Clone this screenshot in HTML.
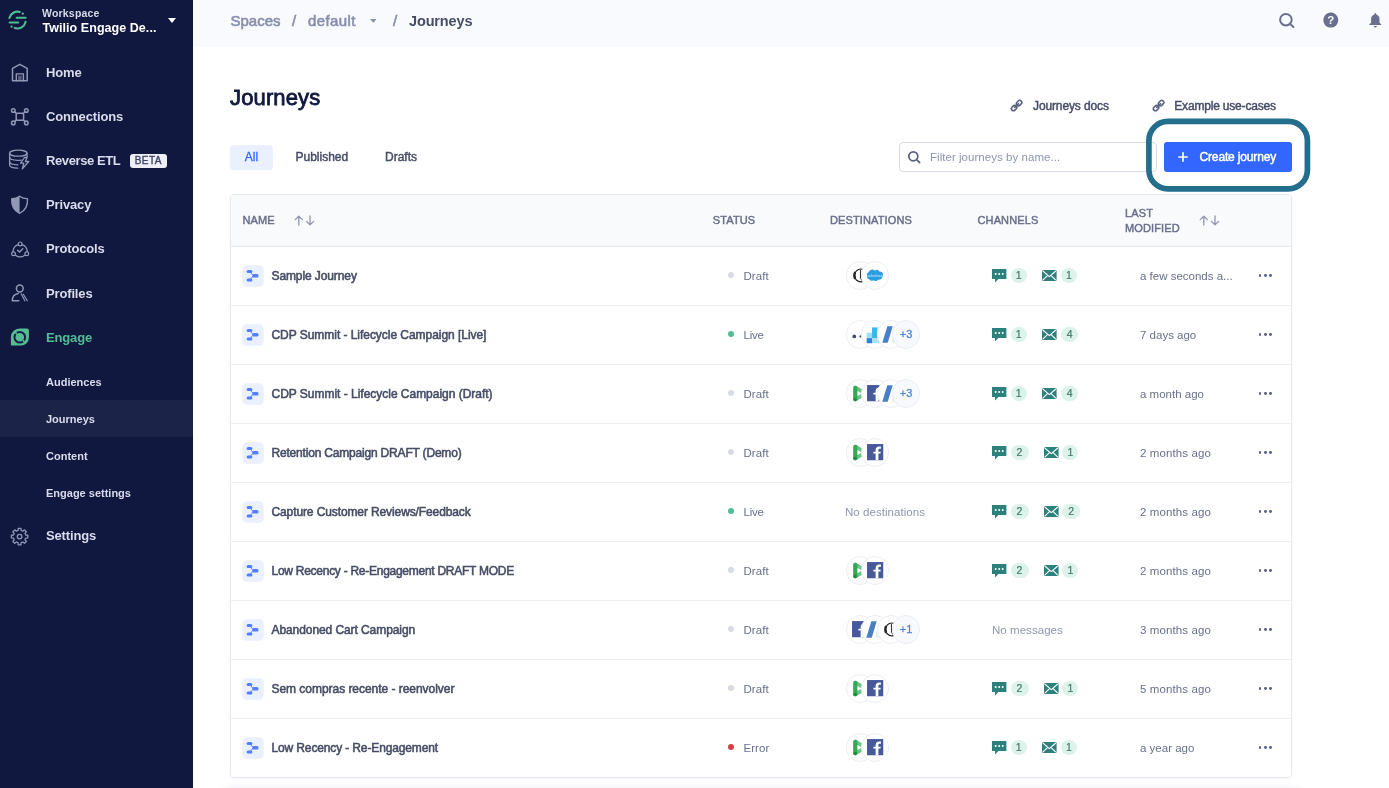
<!DOCTYPE html>
<html lang="en">
<head>
<meta charset="utf-8">
<title>Journeys</title>
<style>
*{box-sizing:border-box;margin:0;padding:0}
html,body{width:1389px;height:788px;overflow:hidden;background:#fff}
body{font-family:"Liberation Sans",sans-serif;color:#474d66;position:relative}
.abs{position:absolute;white-space:nowrap}
/* sidebar */
#side{position:absolute;left:0;top:0;width:193px;height:788px;background:#101840}
#side .it{position:absolute;left:46px;font-size:13px;font-weight:700;color:#d9dcea;white-space:nowrap;line-height:16px;letter-spacing:-.15px}
#side .sub{position:absolute;left:46px;font-size:11px;font-weight:700;color:#d9dcea;white-space:nowrap;line-height:14px}
#active{position:absolute;left:0;top:400px;width:193px;height:37px;background:#1c2349}
#sideic{position:absolute;left:0;top:0}
/* topbar */
#top{position:absolute;left:193px;top:0;width:1196px;height:47px;background:#f9fafd}
.bc{position:absolute;top:11.500px;font-size:15px;line-height:18px;color:#888eac;white-space:nowrap;-webkit-text-stroke:.6px #888eac}
/* main */
h1{position:absolute;left:230px;top:84.700px;font-size:22px;line-height:26px;font-weight:400;color:#101840;letter-spacing:.14px;-webkit-text-stroke:.8px #101840}
.tab{position:absolute;top:145px;height:25px;line-height:25.500px;font-size:12px;color:#474d66;white-space:nowrap;-webkit-text-stroke:.45px #474d66}
.lnk{position:absolute;top:98.700px;font-size:12px;line-height:14px;color:#474d66;white-space:nowrap;letter-spacing:-.12px;-webkit-text-stroke:.45px #474d66}
#search{position:absolute;left:899px;top:142px;width:258px;height:30px;border:1px solid #d8dae5;border-radius:4px;background:#fff}
#search span{position:absolute;left:30px;top:7px;font-size:11.500px;line-height:14px;color:#8f95b2;white-space:nowrap;letter-spacing:.04px}
#btn{position:absolute;left:1164px;top:142px;width:128px;height:30px;border-radius:3px;background:#3366ff;color:#fff;font-size:12px;line-height:30px;white-space:nowrap}
#anno{position:absolute;left:1146px;top:118.700px;width:164px;height:73px;border:5.500px solid #236e8d;border-radius:20px}
/* table */
#tbl{position:absolute;left:230px;top:194px;width:1062px;height:584px;border:1px solid #e6e8f0;border-radius:4px;box-shadow:0 1px 3px rgba(16,24,64,.04)}
#thead{position:absolute;left:231px;top:195px;width:1060px;height:52px;background:#f9fafc;border-bottom:1px solid #e6e8f0;border-radius:3px 3px 0 0}
.th{position:absolute;font-size:11px;line-height:13px;color:#696f8c;letter-spacing:.12px;white-space:nowrap;-webkit-text-stroke:.45px #696f8c}
.row{position:absolute;left:0;width:1389px;height:59px}
.row.ln:after{content:"";position:absolute;left:231px;width:1060px;bottom:0;height:1px;background:#edeff5}
.row .ji{position:absolute;left:242px;top:18.500px;width:22px;height:22px}
.row .nm{position:absolute;left:271.500px;top:22px;font-size:12px;line-height:15px;color:#474d66;white-space:nowrap;letter-spacing:-.05px;-webkit-text-stroke:.55px #474d66}
.row .dot{position:absolute;left:728.200px;top:25.400px;width:6px;height:6px;border-radius:50%}
.dot.draft{background:#d8dae5}.dot.live{background:#52bd94}.dot.error{background:#d14343}
.row .st{position:absolute;left:743.500px;top:22px;font-size:11.500px;line-height:15px;color:#696f8c;white-space:nowrap;letter-spacing:.05px}
.row .dc{position:absolute;top:14.900px;width:28.300px;height:28.300px;border-radius:50%;background:#fff;border:1px solid #ebedf3;overflow:hidden}
.row .dc svg{position:absolute;left:-1px;top:-1px;width:28.300px;height:28.300px}
.row .dc.more{background:#f8f9fc;color:#4a88dc;font-size:11px;line-height:27.300px;text-align:center;letter-spacing:0;-webkit-text-stroke:.3px #4a88dc}
.row .none{position:absolute;top:22px;font-size:11.500px;line-height:15px;color:#8f95b2;white-space:nowrap;letter-spacing:.05px}
.row .chi{position:absolute;line-height:0}
.row .bd{position:absolute;top:21px;height:15px;border-radius:8px;background:#dcf2ea;color:#3d7c64;font-size:10.500px;line-height:15px;text-align:center;-webkit-text-stroke:.2px #3d7c64}
.row .md{position:absolute;left:1140px;top:22px;font-size:11.500px;line-height:15px;color:#696f8c;white-space:nowrap}
.row .dots3{position:absolute;left:1258.500px;top:27.300px;width:14px;height:3px}
.row .dots3 i{position:absolute;top:0;width:2.800px;height:2.800px;border-radius:50%;background:#5a607f}
.row .dots3 i:nth-child(1){left:0}.row .dots3 i:nth-child(2){left:5.300px}.row .dots3 i:nth-child(3){left:10.600px}
</style>
</head>
<body><div id="root" style="position:absolute;left:0;top:0;width:1389px;height:788px;will-change:transform">
<!-- SIDEBAR -->
<div id="side">
  <div id="active"></div>
  <svg id="sideic" width="40" height="560" viewBox="0 0 40 560" fill="none" stroke="#9298b8" stroke-width="1.500" stroke-linecap="round" stroke-linejoin="round">
    <!-- logo -->
    <g stroke="#52bd94" stroke-width="2.100">
      <path d="M9.400 17.900A8.400 8.400 0 0 1 19.800 12"/><path d="M16.700 17.700H25.600"/><path d="M9.700 22.500H18.200"/><path d="M25.600 21.900A8.400 8.400 0 0 1 14.800 28.100"/>
      <circle cx="22.800" cy="13.700" r="1.150" fill="#52bd94" stroke="none"/><circle cx="11.600" cy="26.700" r="1.150" fill="#52bd94" stroke="none"/>
    </g>
    <!-- home -->
    <path d="M12.500 80.700V68.400L19.800 64.300L27.200 68.400V80.700Z" stroke-width="1.500"/>
    <path d="M16.300 80.700V73.900H23.400V80.700" stroke-width="1.400"/>
    <rect x="18" y="75.700" width="3.700" height="4.300" fill="#9298b8" fill-opacity=".55" stroke="none"/>
    <!-- connections -->
    <rect x="16.200" y="113.300" width="7.400" height="6.900" rx="1.300"/>
    <circle cx="13.300" cy="110.500" r="1.800"/><circle cx="26.300" cy="110.500" r="1.800"/><circle cx="13.300" cy="122.900" r="1.800"/><circle cx="26.300" cy="122.900" r="1.800"/>
    <path d="M14.600 111.800L16.500 113.600M25 111.800L23.300 113.600M14.600 121.600L16.500 119.900M25 121.600L23.300 119.900"/>
    <!-- reverse etl -->
    <g stroke-width="1.300">
    <ellipse cx="18.300" cy="153.200" rx="8.700" ry="3"/>
    <path d="M9.600 153.200V165c0 1.700 3.600 3.100 8.200 3.200"/>
    <path d="M27 153.200V157"/>
    <path d="M9.600 157.300c0 1.600 3.600 2.900 8.300 3 1.200 0 2.300-.1 3.300-.2"/>
    <path d="M9.600 161.800c0 1.600 3.600 2.900 8.300 3"/>
    <path d="M24.500 157.500L20.500 163.200H23.800L22.300 168.800L28.800 161.500H25.400L27 157.500Z"/>
    </g>
    <!-- privacy -->
    <path d="M19.600 196.200C22 198 24.900 198.800 27.500 198.700C27.900 205 25.500 210.400 19.600 213.500C13.700 210.400 11.300 205 11.700 198.700C14.300 198.800 17.200 198 19.600 196.200Z" stroke-width="1.300"/>
    <path d="M19.600 196.200V213.500C13.700 210.400 11.300 205 11.700 198.700C14.300 198.800 17.200 198 19.600 196.200Z" fill="#9298b8" stroke="none"/>
    <!-- protocols -->
    <g stroke-width="1.200">
    <path d="M18.300 244.600C15.300 245.500 13.200 248.200 13 251.600M22 244.600C25 245.500 27.100 248.200 27.300 251.600M15.500 255.200C18.300 257.300 22 257.300 24.800 255.200"/>
    <circle cx="20.150" cy="243.900" r="1.900"/><circle cx="13.500" cy="253.800" r="1.900"/><circle cx="26.800" cy="253.800" r="1.900"/>
    <path d="M17.600 250.200L19.500 252.100L22.800 248.800" stroke-width="1.400"/>
    </g>
    <!-- profiles -->
    <circle cx="19.800" cy="288.500" r="3.400"/>
    <path d="M12.300 300.800C12.300 297 14.500 294 18.200 293.400M12.300 300.800H18.800"/>
    <path d="M21.200 293.800L24.800 300.800M23.300 294.200L27.300 300.800" stroke-width="1.200"/>
    <!-- engage -->
    <path d="M19.500 328.600H26.900A2 2 0 0 1 28.900 330.600V337.500A8 8 0 0 1 20.900 345.500H10.900V337.200A8.600 8.600 0 0 1 19.500 328.600Z" fill="#55bd94" stroke="none"/>
    <circle cx="19.800" cy="337.200" r="5.300" stroke="#142046" stroke-width="2"/>
    <path d="M14.800 331.800L16.800 334M23.200 340.600L25.200 342.800" stroke="#55bd94" stroke-width="1.500"/>
    <!-- settings -->
    <path d="M18.080 530.490 L18.240 528.410 L20.960 528.410 L21.120 530.490 L22.850 531.200 L24.430 529.850 L26.350 531.770 L25 533.350 L25.710 535.080 L27.790 535.240 L27.790 537.960 L25.710 538.120 L25 539.850 L26.350 541.430 L24.430 543.350 L22.850 542 L21.120 542.710 L20.960 544.790 L18.240 544.790 L18.080 542.710 L16.350 542 L14.770 543.350 L12.850 541.430 L14.200 539.850 L13.490 538.120 L11.410 537.960 L11.410 535.240 L13.490 535.080 L14.200 533.350 L12.850 531.770 L14.770 529.850 L16.350 531.200Z" stroke-width="1.300"/>
    <circle cx="19.600" cy="536.600" r="2.300" stroke-width="1.300"/>
  </svg>
  <div class="abs" style="left:42px;top:7.300px;font-size:10.500px;line-height:12px;font-weight:700;color:#d8dbe8;letter-spacing:.2px">Workspace</div>
  <div class="abs" style="left:42.500px;top:20px;font-size:12.500px;line-height:16px;font-weight:700;color:#fff;letter-spacing:.05px">Twilio Engage De...</div>
  <svg class="abs" style="left:168px;top:18px" width="8" height="5" viewBox="0 0 8 5"><path d="M0 0h8L4 5z" fill="#fff"/></svg>

  <div class="it" style="top:64.500px">Home</div>
  <div class="it" style="top:108.500px">Connections</div>
  <div class="it" style="top:152.500px;letter-spacing:-.4px">Reverse ETL</div>
  <div class="abs" style="left:129.500px;top:153.500px;width:37.500px;height:14.500px;border-radius:3px;background:#edeff5;color:#3b4265;font-size:10px;line-height:14.500px;text-align:center;letter-spacing:.45px;-webkit-text-stroke:.35px #3b4265">BETA</div>
  <div class="it" style="top:197px">Privacy</div>
  <div class="it" style="top:241px">Protocols</div>
  <div class="it" style="top:285.500px">Profiles</div>
  <div class="it" style="top:329.500px;color:#52bd94">Engage</div>
  <div class="sub" style="top:375px">Audiences</div>
  <div class="sub" style="top:412px">Journeys</div>
  <div class="sub" style="top:449px">Content</div>
  <div class="sub" style="top:486px">Engage settings</div>
  <div class="it" style="top:528px">Settings</div>
</div>

<!-- TOPBAR -->
<div id="top"></div>
<div class="bc" style="left:230.500px">Spaces</div>
<div class="bc" style="left:292px">/</div>
<div class="bc" style="left:308px;letter-spacing:.4px">default</div>
<svg class="abs" style="left:369.700px;top:18.900px" width="6.600" height="3.800" viewBox="0 0 7 4"><path d="M0 0h7L3.500 4z" fill="#888eac"/></svg>
<div class="bc" style="left:393px">/</div>
<div class="bc" style="left:409px;font-weight:700;color:#474d66;font-size:14.500px;letter-spacing:-.14px;-webkit-text-stroke:0">Journeys</div>
<!-- top icons -->
<svg class="abs" style="left:1277px;top:11px" width="20" height="20" viewBox="1277 11 20 20" fill="none" stroke="#696f8c" stroke-width="2" stroke-linecap="round"><circle cx="1285.900" cy="19.700" r="5.800"/><path d="M1290.200 24L1293.400 27"/></svg>
<svg class="abs" style="left:1323px;top:12px" width="16" height="16" viewBox="0 0 16 16"><circle cx="7.800" cy="8.100" r="7.500" fill="#696f8c"/><text x="7.800" y="12.200" text-anchor="middle" font-family="Liberation Sans, sans-serif" font-size="11.500" font-weight="700" fill="#f9fafd">?</text></svg>
<svg class="abs" style="left:1369px;top:13px" width="13" height="15" viewBox="0 0 13 15"><path d="M6.300 0.300c.7 0 1.100.5 1.100 1.100v.3c2 .5 3.100 2.200 3.100 4.300v3.800l1.700 1.400v.9H.4v-.9l1.700-1.400V6c0-2.100 1.100-3.800 3.100-4.300v-.3c0-.6.400-1.100 1.100-1.100zM4.800 13h3a1.500 1.500 0 0 1-3 0z" fill="#696f8c"/></svg>

<!-- HEADER -->
<h1>Journeys</h1>
<svg class="abs" style="left:1010px;top:98.800px" width="13.200" height="13.200" viewBox="0 0 14 14" fill="none" stroke="#5a607f" stroke-width="1.700"><g transform="rotate(-45 7 7)"><rect x=".1" y="4.800" width="6.200" height="4.400" rx="2.200"/><rect x="7.700" y="4.800" width="6.200" height="4.400" rx="2.200"/><path d="M3.500 7H10.500"/></g></svg>
<div class="lnk" style="left:1033px">Journeys docs</div>
<svg class="abs" style="left:1151.800px;top:98.800px" width="13.200" height="13.200" viewBox="0 0 14 14" fill="none" stroke="#5a607f" stroke-width="1.700"><g transform="rotate(-45 7 7)"><rect x=".1" y="4.800" width="6.200" height="4.400" rx="2.200"/><rect x="7.700" y="4.800" width="6.200" height="4.400" rx="2.200"/><path d="M3.500 7H10.500"/></g></svg>
<div class="lnk" style="left:1174.300px;letter-spacing:-.19px">Example use-cases</div>

<div class="tab" style="left:230px;width:43px;text-align:center;background:#ebf0ff;color:#3366ff;border-radius:4px;-webkit-text-stroke:.3px #3366ff">All</div>
<div class="tab" style="left:295.500px">Published</div>
<div class="tab" style="left:385px">Drafts</div>

<div id="search">
  <svg class="abs" style="left:7px;top:6.500px" width="15" height="15" viewBox="0 0 15 15" fill="none" stroke="#5a607f" stroke-width="1.800" stroke-linecap="round"><circle cx="6.300" cy="6.300" r="4.500"/><path d="M9.700 9.700l2.900 2.900"/></svg>
  <span>Filter journeys by name...</span>
</div>
<div id="btn"><svg class="abs" style="left:14.200px;top:10px" width="10" height="10" viewBox="0 0 10 10" stroke="#fff" stroke-width="1.700"><path d="M5 .3v9.400M.3 5h9.400"/></svg><span class="abs" style="left:35.500px;top:0;letter-spacing:-.15px;-webkit-text-stroke:.45px #fff">Create journey</span></div>
<svg class="abs" style="left:1140px;top:112px" width="180" height="90" viewBox="1140 112 180 90" fill="none"><rect x="1148.900" y="121.400" width="158.500" height="67.500" rx="19" stroke="#236e8d" stroke-width="5.700"/></svg>

<!-- TABLE -->
<div id="tbl"></div>
<div id="thead"></div>
<div class="th" style="left:242.500px;top:214px">NAME</div>
<svg class="abs" style="left:294px;top:215px" width="21" height="11" viewBox="0 0 21 11" fill="none" stroke="#8f95b2" stroke-width="1.300" stroke-linecap="round" stroke-linejoin="round"><path d="M4.800 10V1.200M1.200 4.600L4.800 1.200L8.400 4.600"/><path d="M16 1V9.800M12.400 6.400L16 9.800L19.600 6.400"/></svg>
<div class="th" style="left:712.800px;top:214px">STATUS</div>
<div class="th" style="left:830px;top:214px">DESTINATIONS</div>
<div class="th" style="left:977.500px;top:214px">CHANNELS</div>
<div class="th" style="left:1125px;top:206px;line-height:15px">LAST<br>MODIFIED</div>
<svg class="abs" style="left:1198.500px;top:215px" width="21" height="11" viewBox="0 0 21 11" fill="none" stroke="#8f95b2" stroke-width="1.300" stroke-linecap="round" stroke-linejoin="round"><path d="M4.800 10V1.200M1.200 4.600L4.800 1.200L8.400 4.600"/><path d="M16 1V9.800M12.400 6.400L16 9.800L19.600 6.400"/></svg>
<div style="position:absolute;left:225px;top:789px;width:1075px;height:10px;box-shadow:0 0 10px rgba(16,24,64,.09)"></div>
<div class="row ln" style="top:246.5px">
<span class="ji"><svg viewBox="0 0 22 22" width="22" height="22"><rect x=".3" y=".3" width="21.400" height="21.400" rx="4.500" fill="#ebf0ff"/><rect x="4.600" y="5" width="5.800" height="3.100" rx="1.500" fill="#527dff"/><rect x="4.600" y="13.400" width="5.800" height="3.100" rx="1.500" fill="#527dff"/><rect x="10.300" y="9.100" width="6.200" height="3.400" rx="1.600" fill="#527dff"/><path d="M8.500 7.500l3 3.300-3 3.300" stroke="#527dff" stroke-width="1" fill="none"/></svg></span><span class="nm" style="letter-spacing:-0.1px">Sample Journey</span>
<span class="dot draft"></span><span class="st">Draft</span>
<span class="dc" style="left:845.7px"><svg viewBox="0 0 29 29"><circle cx="15.300" cy="14.800" r="6.600" fill="none" stroke="#222" stroke-width="1.200"/><path d="M9.400 11.300a7.500 7.500 0 0 0 0 7" stroke="#222" stroke-width="2.300" fill="none"/><path d="M14.800 9.300v8.700l2.500 2.800" stroke="#222" stroke-width="1" fill="none"/></svg></span>
<span class="dc" style="left:861.1px"><svg viewBox="0 0 29 29"><path d="M6.300 15.600a3 3 0 0 1 1.700-4.200 3.700 3.700 0 0 1 6.200-1.500 3.300 3.300 0 0 1 4.700.9 3.400 3.400 0 0 1 3 5.600 3.100 3.100 0 0 1-4.200 2.500 3.100 3.100 0 0 1-4.500.8 3.200 3.200 0 0 1-4.700-1 2.700 2.700 0 0 1-2.200-3.100z" fill="#2a9de0"/><text x="14.300" y="16.300" text-anchor="middle" font-family="Liberation Sans, sans-serif" font-size="3.400" font-style="italic" fill="#d9eefb">salesforce</text></svg></span>
<span class="chi" style="left:992px;top:22.500px"><svg viewBox="0 0 15 14" width="15" height="14"><path d="M0 0h14.400v10H6.400L3 13.600V10H0z" fill="#2d807c"/><circle cx="3.700" cy="5" r="1" fill="#fff"/><circle cx="7.200" cy="5" r="1" fill="#fff"/><circle cx="10.700" cy="5" r="1" fill="#fff"/></svg></span><span class="bd" style="left:1010.500px;width:16.4px">1</span>
<span class="chi" style="left:1042.2px;top:23.200px"><svg viewBox="0 0 15 11" width="15" height="11"><rect x="0" y="0" width="14.600" height="11" rx="1.500" fill="#2d807c"/><path d="M.8 1l6.500 5.600L13.800 1M.8 10.200l4.700-4.600M13.800 10.200L9.100 5.600" stroke="#fff" stroke-width="1.100" fill="none"/></svg></span><span class="bd" style="left:1060.8px;width:16px">1</span>
<span class="md" style="letter-spacing:0">a few seconds a...</span><span class="dots3"><i></i><i></i><i></i></span>
</div>
<div class="row ln" style="top:305.5px">
<span class="ji"><svg viewBox="0 0 22 22" width="22" height="22"><rect x=".3" y=".3" width="21.400" height="21.400" rx="4.500" fill="#ebf0ff"/><rect x="4.600" y="5" width="5.800" height="3.100" rx="1.500" fill="#527dff"/><rect x="4.600" y="13.400" width="5.800" height="3.100" rx="1.500" fill="#527dff"/><rect x="10.300" y="9.100" width="6.200" height="3.400" rx="1.600" fill="#527dff"/><path d="M8.500 7.500l3 3.300-3 3.300" stroke="#527dff" stroke-width="1" fill="none"/></svg></span><span class="nm" style="letter-spacing:-0.043px">CDP Summit - Lifecycle Campaign [Live]</span>
<span class="dot live"></span><span class="st" style="letter-spacing:-.2px">Live</span>
<span class="dc" style="left:845.7px"><svg viewBox="0 0 29 29"><circle cx="8.500" cy="16.800" r="1.900" fill="#3b4c7a"/><circle cx="15" cy="16.800" r="1.200" fill="#3b4c7a"/></svg></span>
<span class="dc" style="left:861.1px"><svg viewBox="0 0 29 29"><rect x="5.800" y="13.100" width="5.500" height="5.500" fill="#9fe0f2"/><rect x="5.800" y="18.600" width="5.500" height="5.200" fill="#2f7fe0"/><rect x="11.300" y="7.600" width="5.400" height="11" fill="#3eb5e5"/><rect x="11.300" y="18.600" width="5.400" height="5.200" fill="#a0e2f0"/><rect x="16.700" y="7.600" width="5.400" height="16.200" fill="#9fe0f2"/></svg></span>
<span class="dc" style="left:876.5px"><svg viewBox="0 0 29 29"><path d="M5.400 23.200L10.600 6.300h5.500L11 23.200z" fill="#4a7fc6"/><path d="M15.200 16l4.400 7.200h-4.400z" fill="#e3f2e3"/></svg></span>
<span class="dc more" style="left:891.9px">+3</span>
<span class="chi" style="left:992px;top:22.500px"><svg viewBox="0 0 15 14" width="15" height="14"><path d="M0 0h14.400v10H6.400L3 13.600V10H0z" fill="#2d807c"/><circle cx="3.700" cy="5" r="1" fill="#fff"/><circle cx="7.200" cy="5" r="1" fill="#fff"/><circle cx="10.700" cy="5" r="1" fill="#fff"/></svg></span><span class="bd" style="left:1010.500px;width:16.4px">1</span>
<span class="chi" style="left:1042.2px;top:23.200px"><svg viewBox="0 0 15 11" width="15" height="11"><rect x="0" y="0" width="14.600" height="11" rx="1.500" fill="#2d807c"/><path d="M.8 1l6.500 5.600L13.800 1M.8 10.200l4.700-4.600M13.800 10.200L9.100 5.600" stroke="#fff" stroke-width="1.100" fill="none"/></svg></span><span class="bd" style="left:1060.8px;width:17.5px">4</span>
<span class="md" style="letter-spacing:0">7 days ago</span><span class="dots3"><i></i><i></i><i></i></span>
</div>
<div class="row ln" style="top:364.5px">
<span class="ji"><svg viewBox="0 0 22 22" width="22" height="22"><rect x=".3" y=".3" width="21.400" height="21.400" rx="4.500" fill="#ebf0ff"/><rect x="4.600" y="5" width="5.800" height="3.100" rx="1.500" fill="#527dff"/><rect x="4.600" y="13.400" width="5.800" height="3.100" rx="1.500" fill="#527dff"/><rect x="10.300" y="9.100" width="6.200" height="3.400" rx="1.600" fill="#527dff"/><path d="M8.500 7.500l3 3.300-3 3.300" stroke="#527dff" stroke-width="1" fill="none"/></svg></span><span class="nm" style="letter-spacing:-0.02px">CDP Summit - Lifecycle Campaign (Draft)</span>
<span class="dot draft"></span><span class="st">Draft</span>
<span class="dc" style="left:845.7px"><svg viewBox="0 0 29 29"><path d="M7.500 9a2 2 0 0 1 3-1.700l11 6a1.800 1.800 0 0 1 0 3.200l-11 6a2 2 0 0 1-3-1.700z" fill="#6cc487"/><rect x="7.500" y="7" width="4.200" height="15.800" rx="2" fill="#34a853"/><path d="M11.700 12.200l4.600 2.600-4.600 2.600z" fill="#fff"/><circle cx="9.300" cy="21" r="1.800" fill="#1e8e3e"/></svg></span>
<span class="dc" style="left:861.1px"><svg viewBox="0 0 29 29"><rect x="6.200" y="6.200" width="16.600" height="16.600" fill="#47589b"/><path d="M15 22.800V15.900H12.700V14H15V12.450C15 9.850 16.450 8.600 18.550 8.600C19.350 8.600 20.050 8.670 20.400 8.720V10.900H19.250C18.150 10.900 17.800 11.350 17.800 12.350V14H20.250L19.950 15.900H17.800V22.800Z" fill="#fff"/></svg></span>
<span class="dc" style="left:876.5px"><svg viewBox="0 0 29 29"><path d="M5.400 23.200L10.600 6.300h5.500L11 23.200z" fill="#4a7fc6"/><path d="M15.200 16l4.400 7.200h-4.400z" fill="#e3f2e3"/></svg></span>
<span class="dc more" style="left:891.9px">+3</span>
<span class="chi" style="left:992px;top:22.500px"><svg viewBox="0 0 15 14" width="15" height="14"><path d="M0 0h14.400v10H6.400L3 13.600V10H0z" fill="#2d807c"/><circle cx="3.700" cy="5" r="1" fill="#fff"/><circle cx="7.200" cy="5" r="1" fill="#fff"/><circle cx="10.700" cy="5" r="1" fill="#fff"/></svg></span><span class="bd" style="left:1010.500px;width:16.4px">1</span>
<span class="chi" style="left:1042.2px;top:23.200px"><svg viewBox="0 0 15 11" width="15" height="11"><rect x="0" y="0" width="14.600" height="11" rx="1.500" fill="#2d807c"/><path d="M.8 1l6.500 5.600L13.800 1M.8 10.200l4.700-4.600M13.800 10.200L9.100 5.600" stroke="#fff" stroke-width="1.100" fill="none"/></svg></span><span class="bd" style="left:1060.8px;width:17.5px">4</span>
<span class="md" style="letter-spacing:0">a month ago</span><span class="dots3"><i></i><i></i><i></i></span>
</div>
<div class="row ln" style="top:423.5px">
<span class="ji"><svg viewBox="0 0 22 22" width="22" height="22"><rect x=".3" y=".3" width="21.400" height="21.400" rx="4.500" fill="#ebf0ff"/><rect x="4.600" y="5" width="5.800" height="3.100" rx="1.500" fill="#527dff"/><rect x="4.600" y="13.400" width="5.800" height="3.100" rx="1.500" fill="#527dff"/><rect x="10.300" y="9.100" width="6.200" height="3.400" rx="1.600" fill="#527dff"/><path d="M8.500 7.500l3 3.300-3 3.300" stroke="#527dff" stroke-width="1" fill="none"/></svg></span><span class="nm" style="letter-spacing:-0.19px">Retention Campaign DRAFT (Demo)</span>
<span class="dot draft"></span><span class="st">Draft</span>
<span class="dc" style="left:845.7px"><svg viewBox="0 0 29 29"><path d="M7.500 9a2 2 0 0 1 3-1.700l11 6a1.800 1.800 0 0 1 0 3.200l-11 6a2 2 0 0 1-3-1.700z" fill="#6cc487"/><rect x="7.500" y="7" width="4.200" height="15.800" rx="2" fill="#34a853"/><path d="M11.700 12.200l4.600 2.600-4.600 2.600z" fill="#fff"/><circle cx="9.300" cy="21" r="1.800" fill="#1e8e3e"/></svg></span>
<span class="dc" style="left:861.1px"><svg viewBox="0 0 29 29"><rect x="6.200" y="6.200" width="16.600" height="16.600" fill="#47589b"/><path d="M15 22.800V15.900H12.700V14H15V12.450C15 9.850 16.450 8.600 18.550 8.600C19.350 8.600 20.050 8.670 20.400 8.720V10.900H19.250C18.150 10.900 17.800 11.350 17.800 12.350V14H20.250L19.950 15.900H17.800V22.800Z" fill="#fff"/></svg></span>
<span class="chi" style="left:992px;top:22.500px"><svg viewBox="0 0 15 14" width="15" height="14"><path d="M0 0h14.400v10H6.400L3 13.600V10H0z" fill="#2d807c"/><circle cx="3.700" cy="5" r="1" fill="#fff"/><circle cx="7.200" cy="5" r="1" fill="#fff"/><circle cx="10.700" cy="5" r="1" fill="#fff"/></svg></span><span class="bd" style="left:1010.500px;width:18px">2</span>
<span class="chi" style="left:1043.8px;top:23.200px"><svg viewBox="0 0 15 11" width="15" height="11"><rect x="0" y="0" width="14.600" height="11" rx="1.500" fill="#2d807c"/><path d="M.8 1l6.500 5.600L13.800 1M.8 10.200l4.700-4.600M13.800 10.200L9.100 5.600" stroke="#fff" stroke-width="1.100" fill="none"/></svg></span><span class="bd" style="left:1062.4px;width:16px">1</span>
<span class="md" style="letter-spacing:.1px">2 months ago</span><span class="dots3"><i></i><i></i><i></i></span>
</div>
<div class="row ln" style="top:482.5px">
<span class="ji"><svg viewBox="0 0 22 22" width="22" height="22"><rect x=".3" y=".3" width="21.400" height="21.400" rx="4.500" fill="#ebf0ff"/><rect x="4.600" y="5" width="5.800" height="3.100" rx="1.500" fill="#527dff"/><rect x="4.600" y="13.400" width="5.800" height="3.100" rx="1.500" fill="#527dff"/><rect x="10.300" y="9.100" width="6.200" height="3.400" rx="1.600" fill="#527dff"/><path d="M8.500 7.500l3 3.300-3 3.300" stroke="#527dff" stroke-width="1" fill="none"/></svg></span><span class="nm" style="letter-spacing:-0.11px">Capture Customer Reviews/Feedback</span>
<span class="dot live"></span><span class="st" style="letter-spacing:-.2px">Live</span>
<span class="none" style="left:845px">No destinations</span>
<span class="chi" style="left:992px;top:22.500px"><svg viewBox="0 0 15 14" width="15" height="14"><path d="M0 0h14.400v10H6.400L3 13.600V10H0z" fill="#2d807c"/><circle cx="3.700" cy="5" r="1" fill="#fff"/><circle cx="7.200" cy="5" r="1" fill="#fff"/><circle cx="10.700" cy="5" r="1" fill="#fff"/></svg></span><span class="bd" style="left:1010.500px;width:18px">2</span>
<span class="chi" style="left:1043.8px;top:23.200px"><svg viewBox="0 0 15 11" width="15" height="11"><rect x="0" y="0" width="14.600" height="11" rx="1.500" fill="#2d807c"/><path d="M.8 1l6.500 5.600L13.800 1M.8 10.200l4.700-4.600M13.800 10.200L9.100 5.600" stroke="#fff" stroke-width="1.100" fill="none"/></svg></span><span class="bd" style="left:1062.4px;width:17.5px">2</span>
<span class="md" style="letter-spacing:.1px">2 months ago</span><span class="dots3"><i></i><i></i><i></i></span>
</div>
<div class="row ln" style="top:541.5px">
<span class="ji"><svg viewBox="0 0 22 22" width="22" height="22"><rect x=".3" y=".3" width="21.400" height="21.400" rx="4.500" fill="#ebf0ff"/><rect x="4.600" y="5" width="5.800" height="3.100" rx="1.500" fill="#527dff"/><rect x="4.600" y="13.400" width="5.800" height="3.100" rx="1.500" fill="#527dff"/><rect x="10.300" y="9.100" width="6.200" height="3.400" rx="1.600" fill="#527dff"/><path d="M8.500 7.500l3 3.300-3 3.300" stroke="#527dff" stroke-width="1" fill="none"/></svg></span><span class="nm" style="letter-spacing:-0.267px">Low Recency - Re-Engagement DRAFT MODE</span>
<span class="dot draft"></span><span class="st">Draft</span>
<span class="dc" style="left:845.7px"><svg viewBox="0 0 29 29"><path d="M7.500 9a2 2 0 0 1 3-1.700l11 6a1.800 1.800 0 0 1 0 3.200l-11 6a2 2 0 0 1-3-1.700z" fill="#6cc487"/><rect x="7.500" y="7" width="4.200" height="15.800" rx="2" fill="#34a853"/><path d="M11.700 12.200l4.600 2.600-4.600 2.600z" fill="#fff"/><circle cx="9.300" cy="21" r="1.800" fill="#1e8e3e"/></svg></span>
<span class="dc" style="left:861.1px"><svg viewBox="0 0 29 29"><rect x="6.200" y="6.200" width="16.600" height="16.600" fill="#47589b"/><path d="M15 22.800V15.900H12.700V14H15V12.450C15 9.850 16.450 8.600 18.550 8.600C19.350 8.600 20.050 8.670 20.400 8.720V10.900H19.250C18.150 10.900 17.800 11.350 17.800 12.350V14H20.250L19.950 15.900H17.800V22.800Z" fill="#fff"/></svg></span>
<span class="chi" style="left:992px;top:22.500px"><svg viewBox="0 0 15 14" width="15" height="14"><path d="M0 0h14.400v10H6.400L3 13.600V10H0z" fill="#2d807c"/><circle cx="3.700" cy="5" r="1" fill="#fff"/><circle cx="7.200" cy="5" r="1" fill="#fff"/><circle cx="10.700" cy="5" r="1" fill="#fff"/></svg></span><span class="bd" style="left:1010.500px;width:18px">2</span>
<span class="chi" style="left:1043.8px;top:23.200px"><svg viewBox="0 0 15 11" width="15" height="11"><rect x="0" y="0" width="14.600" height="11" rx="1.500" fill="#2d807c"/><path d="M.8 1l6.500 5.600L13.800 1M.8 10.200l4.700-4.600M13.800 10.200L9.100 5.600" stroke="#fff" stroke-width="1.100" fill="none"/></svg></span><span class="bd" style="left:1062.4px;width:16px">1</span>
<span class="md" style="letter-spacing:.1px">2 months ago</span><span class="dots3"><i></i><i></i><i></i></span>
</div>
<div class="row ln" style="top:600.5px">
<span class="ji"><svg viewBox="0 0 22 22" width="22" height="22"><rect x=".3" y=".3" width="21.400" height="21.400" rx="4.500" fill="#ebf0ff"/><rect x="4.600" y="5" width="5.800" height="3.100" rx="1.500" fill="#527dff"/><rect x="4.600" y="13.400" width="5.800" height="3.100" rx="1.500" fill="#527dff"/><rect x="10.300" y="9.100" width="6.200" height="3.400" rx="1.600" fill="#527dff"/><path d="M8.500 7.500l3 3.300-3 3.300" stroke="#527dff" stroke-width="1" fill="none"/></svg></span><span class="nm" style="letter-spacing:-0.08px">Abandoned Cart Campaign</span>
<span class="dot draft"></span><span class="st">Draft</span>
<span class="dc" style="left:845.7px"><svg viewBox="0 0 29 29"><rect x="6.200" y="6.200" width="16.600" height="16.600" fill="#47589b"/><path d="M15 22.800V15.900H12.700V14H15V12.450C15 9.850 16.450 8.600 18.550 8.600C19.350 8.600 20.050 8.670 20.400 8.720V10.900H19.250C18.150 10.900 17.800 11.350 17.800 12.350V14H20.250L19.950 15.900H17.800V22.800Z" fill="#fff"/></svg></span>
<span class="dc" style="left:861.1px"><svg viewBox="0 0 29 29"><path d="M5.400 23.200L10.600 6.300h5.500L11 23.200z" fill="#4a7fc6"/><path d="M15.200 16l4.400 7.200h-4.400z" fill="#e3f2e3"/></svg></span>
<span class="dc" style="left:876.5px"><svg viewBox="0 0 29 29"><circle cx="15.300" cy="14.800" r="6.600" fill="none" stroke="#222" stroke-width="1.200"/><path d="M9.400 11.300a7.500 7.500 0 0 0 0 7" stroke="#222" stroke-width="2.300" fill="none"/><path d="M14.800 9.300v8.700l2.500 2.800" stroke="#222" stroke-width="1" fill="none"/></svg></span>
<span class="dc more" style="left:891.9px">+1</span>
<span class="none" style="left:992px">No messages</span>
<span class="md" style="letter-spacing:.1px">3 months ago</span><span class="dots3"><i></i><i></i><i></i></span>
</div>
<div class="row ln" style="top:659.5px">
<span class="ji"><svg viewBox="0 0 22 22" width="22" height="22"><rect x=".3" y=".3" width="21.400" height="21.400" rx="4.500" fill="#ebf0ff"/><rect x="4.600" y="5" width="5.800" height="3.100" rx="1.500" fill="#527dff"/><rect x="4.600" y="13.400" width="5.800" height="3.100" rx="1.500" fill="#527dff"/><rect x="10.300" y="9.100" width="6.200" height="3.400" rx="1.600" fill="#527dff"/><path d="M8.500 7.500l3 3.300-3 3.300" stroke="#527dff" stroke-width="1" fill="none"/></svg></span><span class="nm" style="letter-spacing:-0.037px">Sem compras recente - reenvolver</span>
<span class="dot draft"></span><span class="st">Draft</span>
<span class="dc" style="left:845.7px"><svg viewBox="0 0 29 29"><path d="M7.500 9a2 2 0 0 1 3-1.700l11 6a1.800 1.800 0 0 1 0 3.200l-11 6a2 2 0 0 1-3-1.700z" fill="#6cc487"/><rect x="7.500" y="7" width="4.200" height="15.800" rx="2" fill="#34a853"/><path d="M11.700 12.200l4.600 2.600-4.600 2.600z" fill="#fff"/><circle cx="9.300" cy="21" r="1.800" fill="#1e8e3e"/></svg></span>
<span class="dc" style="left:861.1px"><svg viewBox="0 0 29 29"><rect x="6.200" y="6.200" width="16.600" height="16.600" fill="#47589b"/><path d="M15 22.800V15.900H12.700V14H15V12.450C15 9.850 16.450 8.600 18.550 8.600C19.350 8.600 20.050 8.670 20.400 8.720V10.900H19.250C18.150 10.900 17.800 11.350 17.800 12.350V14H20.250L19.950 15.900H17.800V22.800Z" fill="#fff"/></svg></span>
<span class="chi" style="left:992px;top:22.500px"><svg viewBox="0 0 15 14" width="15" height="14"><path d="M0 0h14.400v10H6.400L3 13.600V10H0z" fill="#2d807c"/><circle cx="3.700" cy="5" r="1" fill="#fff"/><circle cx="7.200" cy="5" r="1" fill="#fff"/><circle cx="10.700" cy="5" r="1" fill="#fff"/></svg></span><span class="bd" style="left:1010.500px;width:18px">2</span>
<span class="chi" style="left:1043.8px;top:23.200px"><svg viewBox="0 0 15 11" width="15" height="11"><rect x="0" y="0" width="14.600" height="11" rx="1.500" fill="#2d807c"/><path d="M.8 1l6.500 5.600L13.800 1M.8 10.200l4.700-4.600M13.800 10.200L9.100 5.600" stroke="#fff" stroke-width="1.100" fill="none"/></svg></span><span class="bd" style="left:1062.4px;width:16px">1</span>
<span class="md" style="letter-spacing:.1px">5 months ago</span><span class="dots3"><i></i><i></i><i></i></span>
</div>
<div class="row" style="top:718.5px">
<span class="ji"><svg viewBox="0 0 22 22" width="22" height="22"><rect x=".3" y=".3" width="21.400" height="21.400" rx="4.500" fill="#ebf0ff"/><rect x="4.600" y="5" width="5.800" height="3.100" rx="1.500" fill="#527dff"/><rect x="4.600" y="13.400" width="5.800" height="3.100" rx="1.500" fill="#527dff"/><rect x="10.300" y="9.100" width="6.200" height="3.400" rx="1.600" fill="#527dff"/><path d="M8.500 7.500l3 3.300-3 3.300" stroke="#527dff" stroke-width="1" fill="none"/></svg></span><span class="nm" style="letter-spacing:-0.133px">Low Recency - Re-Engagement</span>
<span class="dot error"></span><span class="st">Error</span>
<span class="dc" style="left:845.7px"><svg viewBox="0 0 29 29"><path d="M7.500 9a2 2 0 0 1 3-1.700l11 6a1.800 1.800 0 0 1 0 3.200l-11 6a2 2 0 0 1-3-1.700z" fill="#6cc487"/><rect x="7.500" y="7" width="4.200" height="15.800" rx="2" fill="#34a853"/><path d="M11.700 12.200l4.600 2.600-4.600 2.600z" fill="#fff"/><circle cx="9.300" cy="21" r="1.800" fill="#1e8e3e"/></svg></span>
<span class="dc" style="left:861.1px"><svg viewBox="0 0 29 29"><rect x="6.200" y="6.200" width="16.600" height="16.600" fill="#47589b"/><path d="M15 22.800V15.900H12.700V14H15V12.450C15 9.850 16.450 8.600 18.550 8.600C19.350 8.600 20.050 8.670 20.400 8.720V10.900H19.250C18.150 10.900 17.800 11.350 17.800 12.350V14H20.250L19.950 15.900H17.800V22.800Z" fill="#fff"/></svg></span>
<span class="chi" style="left:992px;top:22.500px"><svg viewBox="0 0 15 14" width="15" height="14"><path d="M0 0h14.400v10H6.400L3 13.600V10H0z" fill="#2d807c"/><circle cx="3.700" cy="5" r="1" fill="#fff"/><circle cx="7.200" cy="5" r="1" fill="#fff"/><circle cx="10.700" cy="5" r="1" fill="#fff"/></svg></span><span class="bd" style="left:1010.500px;width:16.4px">1</span>
<span class="chi" style="left:1042.2px;top:23.200px"><svg viewBox="0 0 15 11" width="15" height="11"><rect x="0" y="0" width="14.600" height="11" rx="1.500" fill="#2d807c"/><path d="M.8 1l6.500 5.600L13.800 1M.8 10.200l4.700-4.600M13.800 10.200L9.100 5.600" stroke="#fff" stroke-width="1.100" fill="none"/></svg></span><span class="bd" style="left:1060.8px;width:16px">1</span>
<span class="md" style="letter-spacing:0">a year ago</span><span class="dots3"><i></i><i></i><i></i></span>
</div>
</div></body>
</html>
